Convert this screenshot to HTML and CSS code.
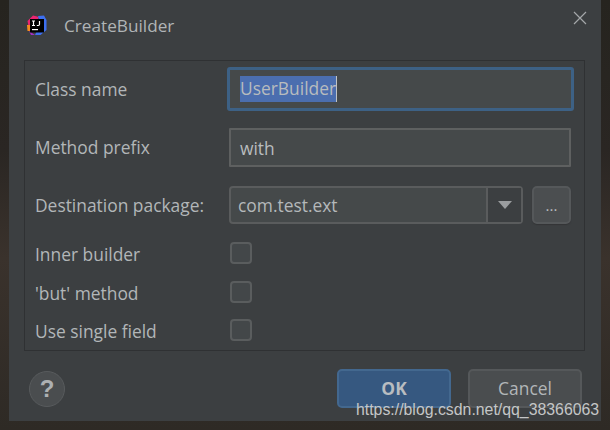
FILE: index.html
```html
<!DOCTYPE html>
<html lang="en">
<head>
  <meta charset="UTF-8" />
  <meta name="viewport" content="width=device-width, initial-scale=1" />
  <title>CreateBuilder</title>
  <link rel="stylesheet" href="styles.css">
</head>
<body>
  <div class="dialog">
    <div class="titlebar">
      <svg class="app-icon" width="20" height="20" viewBox="0 0 20 20">
        <path d="M0.500 6 L6 0.500 L12 2 L8 10 L2 14 Z" fill="#ea2470"/>
        <path d="M11 1 L17 0.500 L19.500 5 V15 L13.500 20 H8 L13 9 Z" fill="#3d6ff0"/>
        <path d="M0 10 H4 V16 H0.500 Z" fill="#f58a1f"/>
        <path d="M2 16 L8 20 H4 Z" fill="#a32fc4"/>
        <rect x="3" y="4" width="14" height="13.500" fill="#000"/>
        <path d="M5 6 H8 M6.500 6 V10.500 M5 10.500 H8 M12.500 6 V9.300 Q12.500 10.500 11.300 10.500 H9.800" stroke="#fff" stroke-width="1.200" fill="none"/>
        <rect x="5" y="14" width="6" height="1.200" fill="#fff"/>
      </svg>
      <span class="title">CreateBuilder</span>
      <svg class="close" width="14" height="14" viewBox="0 0 14 14">
        <path d="M1 1 L13 13 M13 1 L1 13" stroke="#a4a7a9" stroke-width="1.200" fill="none"/>
      </svg>
    </div>

    <form class="panel">
      <label class="lbl lbl-field" for="className">Class name</label>
      <div class="focus-ring">
        <div class="field field-focus" id="className"><span class="selected">UserBuilder</span></div>
      </div>

      <label class="lbl lbl-prefix" for="prefix">Method prefix</label>
      <div class="field field-prefix" id="prefix">with</div>

      <label class="lbl lbl-field">Destination package:</label>
      <div class="package">
        <div class="combo">
          <span class="combo-value">com.test.ext</span>
          <span class="combo-arrow"><i class="triangle"></i></span>
        </div>
        <div class="browse">...</div>
      </div>

      <label class="lbl lbl-check">Inner builder</label>
      <div class="checkbox"></div>

      <label class="lbl lbl-check">'but' method</label>
      <div class="checkbox"></div>

      <label class="lbl lbl-check">Use single field</label>
      <div class="checkbox"></div>
    </form>

    <div class="footer">
      <div class="help">?</div>
      <div class="buttons">
        <div class="btn btn-ok">OK</div>
        <div class="btn">Cancel</div>
      </div>
    </div>
  </div>

  <div class="watermark">https://blog.csdn.net/qq_38366063</div>
</body>
</html>
```

FILE: styles.css
```css
* {
  box-sizing: border-box;
}
body {
  margin: 0;
  width: 610px;
  height: 430px;
  overflow: hidden;
  position: relative;
  background: linear-gradient(180deg, #26241f 0, #2a2623 35%, #3a322c 60%, #2e2a25 100%);
  font-family: 'Open Sans', sans-serif;
  font-size: 17.400px;
  color: #b4b8ba;
}

.dialog {
  width: 592px;
  height: 421px;
  margin-left: 9px;
  background: #3c3f41;
  display: flex;
  flex-direction: column;
  padding: 0 16px 0 15px;
}

.titlebar {
  height: 60px;
  flex: none;
  display: flex;
  align-items: center;
  padding-bottom: 9px;
  position: relative;
}

.app-icon {
  margin: -1px 0 0 3px;
}

.title {
  margin-left: 17px;
  font-size: 17.200px;
  color: #b0b4b6;
}

.close {
  position: absolute;
  right: -2px;
  top: 11px;
}

.panel {
  height: 291px;
  flex: none;
  border: 1px solid #2f3133;
  padding: 9px 13px 0 10px;
  display: grid;
  grid-template-columns: 194px 342px;
  grid-template-rows: 58px 58px 56px 39px 38px 30px;
  align-items: start;
}

.lbl {
  color: #b2b6b8;
  white-space: nowrap;
}
.lbl-field {
  line-height: 38px;
}
.lbl-prefix {
  line-height: 39px;
}
.lbl-check {
  line-height: 24px;
}

.field {
  background: #45494a;
  border: 2px solid #5e6060;
  height: 39px;
  line-height: 37px;
  padding-left: 9px;
  color: #b8bcbe;
}
.field-prefix {
  border-radius: 1px;
}

.focus-ring {
  margin: -3px 0 0 -2px;
  width: 347px;
  height: 44px;
  padding: 3px;
  border-radius: 3px;
  background: #3d6185;
}
.field-focus {
  height: 38px;
  line-height: 38px;
  border: 0;
  padding-left: 10px;
}
.selected {
  display: inline-block;
  height: 26px;
  line-height: 25px;
  background: #4b6eaf;
  border-right: 1px solid #c0c4c6;
  vertical-align: 1px;
}

.package {
  display: flex;
  gap: 9px;
  height: 38px;
}
.combo {
  width: 294px;
  display: flex;
  border: 2px solid #5a5c5d;
  border-radius: 4px;
  background: #45494a;
}
.combo-value {
  flex: 1;
  padding-left: 7px;
  line-height: 34px;
}
.combo-arrow {
  width: 35px;
  background: #3c3f41;
  border-left: 2px solid #5a5c5d;
  display: flex;
  align-items: center;
  justify-content: center;
}
.triangle {
  width: 0;
  height: 0;
  border-left: 7px solid transparent;
  border-right: 7px solid transparent;
  border-top: 8px solid #9a9d9f;
}
.browse {
  width: 39px;
  height: 38px;
  border: 2px solid #55585a;
  border-radius: 5px;
  background: #4b4e50;
  box-shadow: 0 1px 1px #333537;
  text-align: center;
  line-height: 34px;
  font-size: 15px;
  color: #b8bcbe;
}

.checkbox {
  width: 22px;
  height: 22px;
  margin-left: 1px;
  border: 2px solid #5a5d5e;
  border-radius: 4px;
  background: #434749;
}

.footer {
  flex: 1;
  display: flex;
  justify-content: space-between;
  padding: 18px 3px 0 5px;
}

.help {
  width: 36px;
  height: 36px;
  margin-top: 2px;
  border-radius: 50%;
  background: #4a4d4f;
  border: 1px solid #585b5d;
  text-align: center;
  line-height: 34px;
  font-family: 'Liberation Sans', sans-serif;
  font-size: 24px;
  font-weight: bold;
  color: #adb0b2;
}

.buttons {
  display: flex;
  gap: 17px;
}
.btn {
  width: 114px;
  height: 39px;
  border: 2px solid #55585a;
  border-radius: 5px;
  background: #4a4d4f;
  text-align: center;
  line-height: 34px;
  color: #b2b6b8;
}
.btn-ok {
  background: #365880;
  border-color: #43688f;
  font-weight: bold;
  color: #b9bdc0;
}

/* csdn watermark, sits over the buttons */
.watermark {
  position: absolute;
  left: 356px;
  top: 400px;
  font-family: 'Liberation Sans', sans-serif;
  font-size: 15.850px;
  line-height: 20px;
  color: #c4c6c7;
  white-space: nowrap;
}
```
